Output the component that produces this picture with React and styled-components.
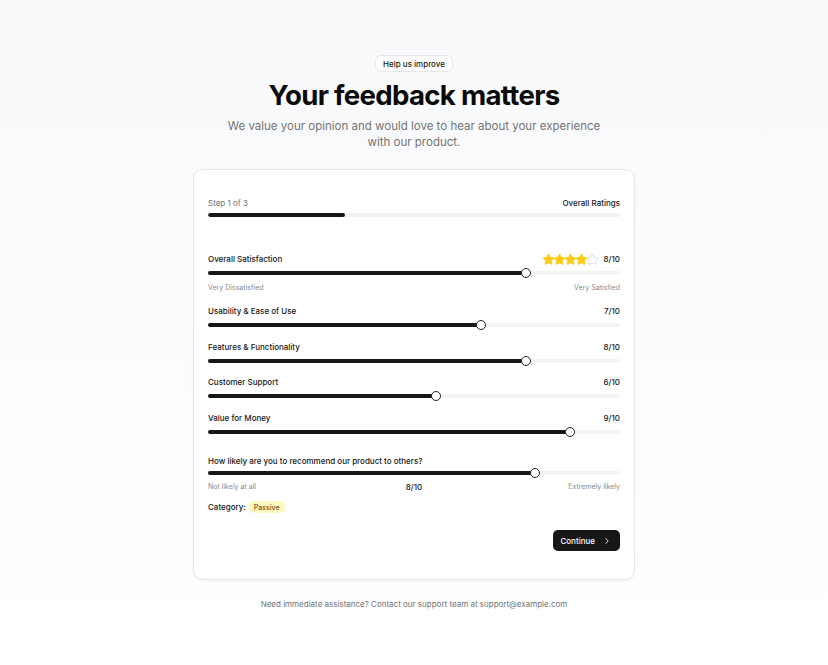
import React from "react";
import styled, { createGlobalStyle } from "styled-components";
import { Star, ChevronRight } from "lucide-react";

const GlobalStyle = createGlobalStyle`
  html, body {
    margin: 0;
    padding: 0;
  }
  body {
    font-family: Inter, "Noto Sans", "Liberation Sans", sans-serif;
    color: #0a0a0a;
    background: linear-gradient(to bottom, #f8f9fb, #ffffff);
    min-height: 100vh;
    -webkit-font-smoothing: antialiased;
  }
`;

const ratings = [
  { label: "Usability & Ease of Use", value: 7 },
  { label: "Features & Functionality", value: 8 },
  { label: "Customer Support", value: 6 },
  { label: "Value for Money", value: 9 },
];

const THUMB = 10;

// radix-like thumb placement: keeps the thumb inside the track bounds
const thumbLeft = (pct) => `calc(${pct}% + ${(0.5 - pct / 100) * THUMB - THUMB / 2}px)`;

const Slider = ({ value, min = 1, max = 10 }) => {
  const pct = ((value - min) / (max - min)) * 100;
  return (
    <StyledSlider>
      <Track>
        <Range style={{ width: `${pct}%` }} />
      </Track>
      <Thumb style={{ left: thumbLeft(pct) }} />
    </StyledSlider>
  );
};

const Stars = ({ count, total = 5 }) => (
  <StarRow>
    {Array.from({ length: total }).map((_, i) => (
      <Star
        key={i}
        size={13}
        strokeWidth={1.5}
        color={i < count ? "#facc15" : "#d1d5db"}
        fill={i < count ? "#facc15" : "none"}
      />
    ))}
  </StarRow>
);

const App = () => {
  return (
    <>
      <GlobalStyle />
      <Page>
        <Hero>
          <Badge>Help us improve</Badge>
          <Title>Your feedback matters</Title>
          <Subtitle>
            We value your opinion and would love to hear about your experience
            with our product.
          </Subtitle>
        </Hero>

        <Card>
          <StepHeader>
            <StepText>Step 1 of 3</StepText>
            <StepName>Overall Ratings</StepName>
          </StepHeader>
          <Progress>
            <ProgressFill style={{ width: "33.33%" }} />
          </Progress>

          <Ratings>
            <RatingBlock>
              <LabelRow>
                <Label>Overall Satisfaction</Label>
                <ValueGroup>
                  <Stars count={4} />
                  <Value>8/10</Value>
                </ValueGroup>
              </LabelRow>
              <Slider value={8} />
              <Hints>
                <Hint>Very Dissatisfied</Hint>
                <Hint>Very Satisfied</Hint>
              </Hints>
            </RatingBlock>

            {ratings.map((r) => (
              <RatingBlock key={r.label}>
                <LabelRow>
                  <Label>{r.label}</Label>
                  <Value>{r.value}/10</Value>
                </LabelRow>
                <Slider value={r.value} />
              </RatingBlock>
            ))}
          </Ratings>

          <NpsBlock>
            <Label>How likely are you to recommend our product to others?</Label>
            <Slider value={8} min={0} max={10} />
            <NpsHints>
              <Hint>Not likely at all</Hint>
              <NpsValue>8/10</NpsValue>
              <Hint $right>Extremely likely</Hint>
            </NpsHints>
            <CategoryRow>
              <CategoryLabel>Category:</CategoryLabel>
              <Pill>Passive</Pill>
            </CategoryRow>
          </NpsBlock>

          <Actions>
            <ContinueButton>
              Continue
              <ChevronRight size={10} strokeWidth={2} />
            </ContinueButton>
          </Actions>
        </Card>

        <Footer>
          Need immediate assistance? Contact our support team at
          support@example.com
        </Footer>
      </Page>
    </>
  );
};

//===== Styles
const Page = styled.main`
  display: flex;
  flex-direction: column;
  align-items: center;
  padding: 55px 16px 40px;
`;

const Hero = styled.header`
  display: flex;
  flex-direction: column;
  align-items: center;
  text-align: center;
`;

const Badge = styled.span`
  display: inline-flex;
  align-items: center;
  height: 17px;
  padding: 0 7px;
  box-sizing: border-box;
  border: 1px solid #e5e7eb;
  border-radius: 6px;
  background: #ffffff;
  font-size: 8px;
  font-weight: 500;
  color: #171717;
`;

const Title = styled.h1`
  margin: 6px 0 0;
  font-size: 27.6px;
  line-height: 34px;
  font-weight: 700;
  letter-spacing: -0.025em;
  color: #0a0a0a;
`;

const Subtitle = styled.p`
  margin: 6px 0 0;
  max-width: 390px;
  font-size: 11.5px;
  line-height: 16px;
  color: #737373;
`;

const Card = styled.section`
  margin-top: 19px;
  width: 442px;
  box-sizing: border-box;
  padding: 27px 14px 28px;
  background: #ffffff;
  border: 1px solid #e5e7eb;
  border-radius: 10px;
  box-shadow: 0 1px 3px rgba(0, 0, 0, 0.06);
  display: flex;
  flex-direction: column;
`;

const StepHeader = styled.div`
  display: flex;
  justify-content: space-between;
  align-items: center;
  height: 12px;
`;

const StepText = styled.span`
  font-size: 8px;
  color: #737373;
`;

const StepName = styled.span`
  font-size: 8px;
  font-weight: 500;
  color: #171717;
`;

const Progress = styled.div`
  margin-top: 4px;
  height: 4px;
  border-radius: 999px;
  background: #f1f2f6;
  overflow: hidden;
`;

const ProgressFill = styled.div`
  height: 100%;
  background: #171717;
  border-radius: 999px;
`;

const Ratings = styled.div`
  margin-top: 36px;
  display: flex;
  flex-direction: column;
  gap: 10.8px;
`;

const RatingBlock = styled.div`
  display: flex;
  flex-direction: column;
  gap: 3px;
`;

const LabelRow = styled.div`
  display: flex;
  justify-content: space-between;
  align-items: center;
  height: 12px;
`;

const Label = styled.span`
  font-size: 8px;
  font-weight: 500;
  color: #171717;
  line-height: 12px;
`;

const ValueGroup = styled.div`
  display: flex;
  align-items: center;
  gap: 5px;
`;

const StarRow = styled.div`
  display: flex;
  align-items: center;

  svg + svg {
    margin-left: -2px;
  }
`;

const Value = styled.span`
  font-size: 8px;
  font-weight: 500;
  color: #171717;
`;

const StyledSlider = styled.div`
  position: relative;
  height: ${THUMB}px;
  display: flex;
  align-items: center;
`;

const Track = styled.div`
  position: relative;
  flex: 1;
  height: 4px;
  border-radius: 999px;
  background: #f3f3f3;
  overflow: hidden;
`;

const Range = styled.div`
  height: 100%;
  background: #171717;
`;

const Thumb = styled.span`
  position: absolute;
  top: 0;
  width: ${THUMB}px;
  height: ${THUMB}px;
  box-sizing: border-box;
  border-radius: 50%;
  border: 1px solid #262626;
  background: #ffffff;
`;

const Hints = styled.div`
  display: flex;
  justify-content: space-between;
  align-items: center;
  height: 10px;
  margin-top: 1px;
  margin-bottom: 2px;
`;

const Hint = styled.span`
  font-size: 7px;
  color: #8a8a8a;
  text-align: ${(props) => (props.$right ? "right" : "left")};
`;

const NpsBlock = styled.div`
  margin-top: 18px;
  display: flex;
  flex-direction: column;
  gap: 1px;
`;

const NpsHints = styled.div`
  display: grid;
  grid-template-columns: 1fr auto 1fr;
  align-items: center;
  margin-top: 1px;
  height: 12px;
`;

const NpsValue = styled.span`
  font-size: 8px;
  font-weight: 500;
  color: #171717;
  padding-top: 2px;
`;

const CategoryRow = styled.div`
  margin-top: 8px;
  display: flex;
  align-items: center;
  gap: 2px;
  height: 12px;
`;

const CategoryLabel = styled.span`
  font-size: 8px;
  font-weight: 500;
  color: #171717;
`;

const Pill = styled.span`
  display: inline-flex;
  align-items: center;
  height: 12px;
  padding: 0 6px;
  border-radius: 999px;
  background: #fef9c3;
  color: #854d0e;
  font-size: 7px;
  font-weight: 500;
`;

const Actions = styled.div`
  margin-top: 17px;
  display: flex;
  justify-content: flex-end;
`;

const ContinueButton = styled.button`
  display: inline-flex;
  align-items: center;
  gap: 7px;
  height: 21px;
  padding: 0 8px 0 7px;
  border: none;
  border-radius: 5px;
  background: #171717;
  color: #ffffff;
  font-family: inherit;
  font-size: 8px;
  font-weight: 500;
  cursor: pointer;
`;

const Footer = styled.p`
  margin: 18px 0 0;
  font-size: 8px;
  line-height: 12px;
  color: #737373;
  text-align: center;
`;

export default App;
